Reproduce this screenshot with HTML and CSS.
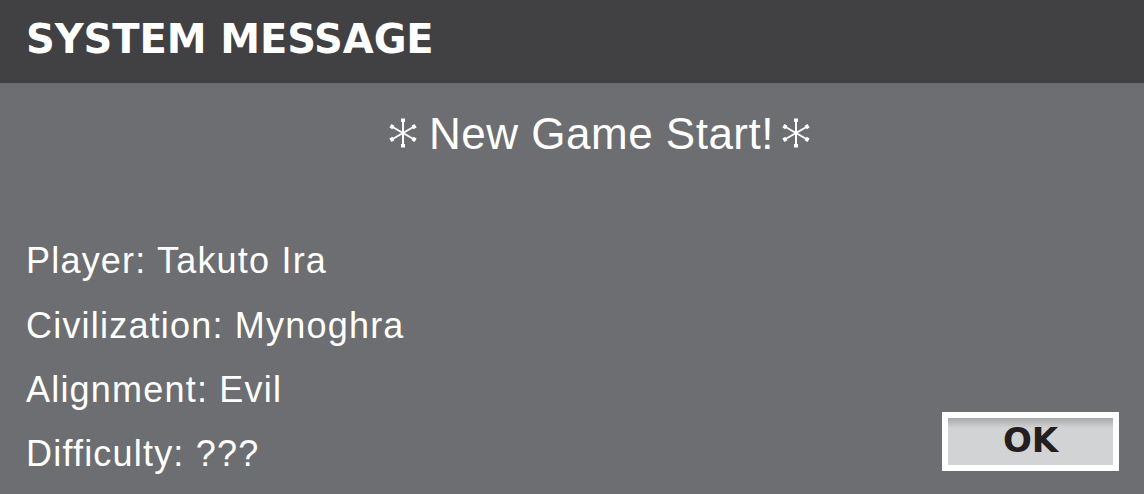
FILE: index.html
```html
<!DOCTYPE html>
<html>
<head>
<meta charset="utf-8">
<link rel="stylesheet" href="styles.css">
</head>
<body>
<div class="dialog">
  <div class="header">SYSTEM MESSAGE</div>
  <div class="title">
    <svg class="star star-left" width="28" height="30" viewBox="0 0 28 30" aria-hidden="true">
      <g stroke="#fff" stroke-width="2" fill="none">
        <line x1="14" y1="2" x2="14" y2="28"/>
        <line x1="2.7" y1="8.5" x2="25.3" y2="21.5"/>
        <line x1="2.7" y1="21.5" x2="25.3" y2="8.5"/>
      </g>
      <g stroke="#fff" stroke-width="4" stroke-linecap="butt">
        <line x1="14" y1="0.5" x2="14" y2="4"/>
        <line x1="14" y1="26" x2="14" y2="29.5"/>
        <line x1="1.4" y1="7.7" x2="4.4" y2="9.5"/>
        <line x1="23.6" y1="20.5" x2="26.6" y2="22.3"/>
        <line x1="1.4" y1="22.3" x2="4.4" y2="20.5"/>
        <line x1="23.6" y1="9.5" x2="26.6" y2="7.7"/>
      </g>
    </svg>
    <span class="title-text">New Game Start!</span>
    <svg class="star star-right" width="28" height="30" viewBox="0 0 28 30" aria-hidden="true">
      <g stroke="#fff" stroke-width="2" fill="none">
        <line x1="14" y1="2" x2="14" y2="28"/>
        <line x1="2.7" y1="8.5" x2="25.3" y2="21.5"/>
        <line x1="2.7" y1="21.5" x2="25.3" y2="8.5"/>
      </g>
      <g stroke="#fff" stroke-width="4" stroke-linecap="butt">
        <line x1="14" y1="0.5" x2="14" y2="4"/>
        <line x1="14" y1="26" x2="14" y2="29.5"/>
        <line x1="1.4" y1="7.7" x2="4.4" y2="9.5"/>
        <line x1="23.6" y1="20.5" x2="26.6" y2="22.3"/>
        <line x1="1.4" y1="22.3" x2="4.4" y2="20.5"/>
        <line x1="23.6" y1="9.5" x2="26.6" y2="7.7"/>
      </g>
    </svg>
  </div>
  <div class="content">
    <ul class="info">
      <li>Player: Takuto Ira</li>
      <li>Civilization: Mynoghra</li>
      <li>Alignment: Evil</li>
      <li>Difficulty: ???</li>
    </ul>
    <button class="ok">OK</button>
  </div>
</div>
</body>
</html>
```
FILE: styles.css
```css
html, body {
  margin: 0;
  padding: 0;
}
body {
  width: 1144px;
  height: 494px;
  overflow: hidden;
  background: #6d6e71;
}
.dialog {
  display: flex;
  flex-direction: column;
  height: 494px;
  color: #ffffff;
  font-family: "Liberation Sans", Arial, sans-serif;
}
.header {
  height: 83px;
  box-sizing: border-box;
  padding: 0 0 6px 26px;
  display: flex;
  align-items: center;
  background: #414042;
  font-family: "DejaVu Sans", sans-serif;
  font-weight: bold;
  font-size: 40px;
  letter-spacing: -0.1px;
}
.title {
  margin-top: 25px;
  height: 52px;
  padding-left: 55px;
  display: flex;
  justify-content: center;
  align-items: center;
}
.title-text {
  font-size: 44px;
  line-height: 52px;
  letter-spacing: 0.5px;
}
.star {
  display: block;
  flex: none;
  margin-top: -3px;
}
.star-left {
  margin-right: 12px;
}
.star-right {
  margin-left: 8px;
}
.content {
  margin-top: 69px;
  display: flex;
  justify-content: space-between;
  align-items: flex-end;
  padding: 0 25px 0 26px;
}
.info {
  list-style: none;
  margin: 0;
  padding: 0;
  font-size: 36px;
  line-height: 64px;
  letter-spacing: 1.2px;
}
.info li:nth-child(2) {
  margin-top: 1px;
}
.ok {
  width: 177px;
  height: 59px;
  box-sizing: border-box;
  margin-bottom: 15px;
  border: 6px solid #ffffff;
  border-radius: 0;
  padding: 0 0 4px;
  background: linear-gradient(to bottom, #a7a9ac 0px, #d1d3d4 10px, #d1d3d4 100%);
  color: #231f20;
  font-family: "DejaVu Sans", sans-serif;
  font-weight: bold;
  font-size: 34px;
  line-height: 1;
}
```
